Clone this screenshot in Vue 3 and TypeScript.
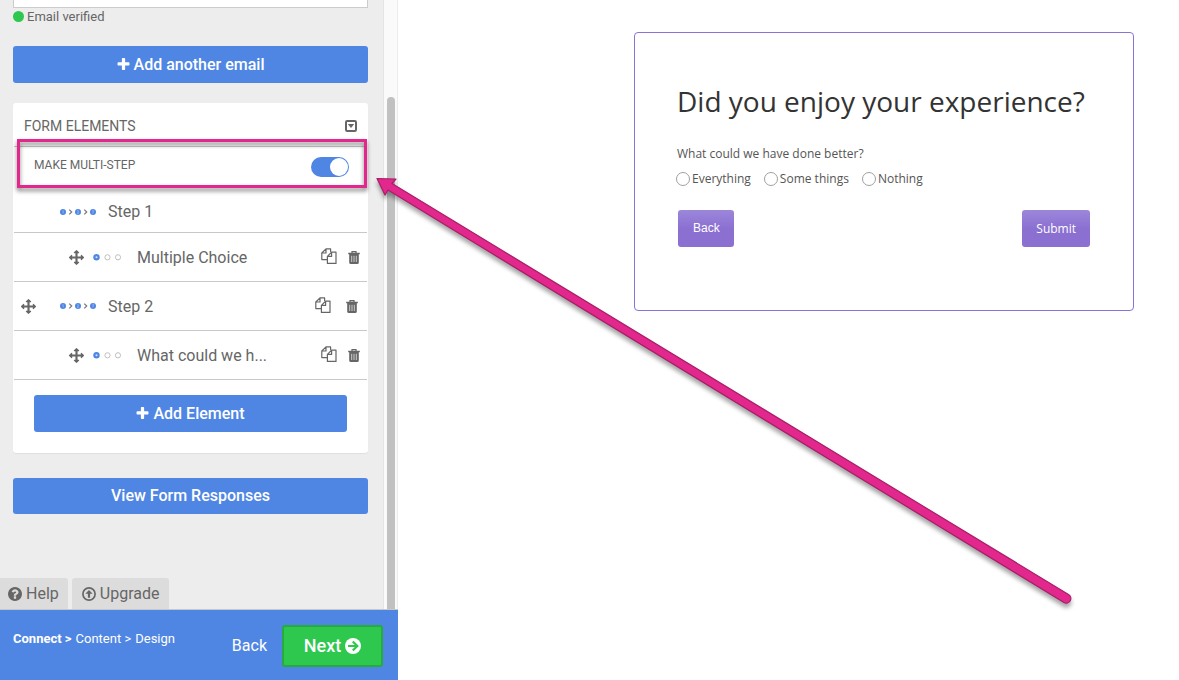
<script setup lang="ts">
import { ref } from 'vue'

interface Row {
  label: string
  kind: 'step' | 'field'
  movable: boolean
}

const rows: Row[] = [
  { label: 'Step 1', kind: 'step', movable: false },
  { label: 'Multiple Choice', kind: 'field', movable: true },
  { label: 'Step 2', kind: 'step', movable: true },
  { label: 'What could we h...', kind: 'field', movable: true },
]

const options = ['Everything', 'Some things', 'Nothing']
const multiStep = ref(true)
const answer = ref('')
const email = ref('')

const plus =
  'M1600 736v192q0 40-28 68t-68 28h-416v416q0 40-28 68t-68 28h-192q-40 0-68-28t-28-68v-416h-416q-40 0-68-28t-28-68v-192q0-40 28-68t68-28h416v-416q0-40 28-68t68-28h192q40 0 68 28t28 68v416h416q40 0 68 28t28 68z'
const arrows =
  'M1792 896q0 26-19 45l-256 256q-19 19-45 19t-45-19-19-45v-128h-384v384h128q26 0 45 19t19 45-19 45l-256 256q-19 19-45 19t-45-19l-256-256q-19-19-19-45t19-45 45-19h128v-384h-384v128q0 26-19 45t-45 19-45-19l-256-256q-19-19-19-45t19-45l256-256q19-19 45-19t45 19 19 45v128h384v-384h-128q-26 0-45-19t-19-45 19-45l256-256q19-19 45-19t45 19l256 256q19 19 19 45t-19 45-45 19h-128v384h384v-128q0-26 19-45t45-19 45 19l256 256q19 19 19 45z'
const question =
  'M1024 1376v-192q0-14-9-23t-23-9h-192q-14 0-23 9t-9 23v192q0 14 9 23t23 9h192q14 0 23-9t9-23zm256-672q0-88-55.500-163t-138.500-116-170-41q-243 0-371 213-15 24 8 42l132 100q7 6 19 6 16 0 25-12 53-68 86-92 34-24 86-24 48 0 85.500 26t37.500 59q0 38-20 61t-68 45q-63 28-115.500 86.500t-52.500 125.500v36q0 14 9 23t23 9h192q14 0 23-9t9-23q0-19 21.500-49.500t54.500-49.500q32-18 49-28.500t46-35 44.500-48 28-60.500 12.500-81zm384 192q0 209-103 385.500t-279.500 279.500-385.500 103-385.500-103-279.500-279.500-103-385.500 103-385.500 279.500-279.500 385.500-103 385.500 103 279.500 279.500 103 385.500z'
</script>

<template>
  <div class="page">
    <aside class="sidebar">
      <div class="scroller">
        <div class="content">
          <input v-model="email" class="email" type="email" aria-label="Email" />
          <p class="verified"><span class="dot"></span>Email verified</p>

          <button class="btn add-email" type="button">
            <svg class="plus" viewBox="128 128 1536 1536"><path :d="plus" /></svg>Add another email
          </button>

          <section class="card">
            <header class="card-head">
              <h2>FORM ELEMENTS</h2>
              <button class="icon-btn" type="button" aria-label="Collapse">
                <svg width="12" height="12" viewBox="0 0 12 12">
                  <rect x="1" y="1" width="10" height="10" rx="1.2" fill="none" stroke="currentColor" stroke-width="2" />
                  <path d="M2.800 4h6.400L6 8z" />
                </svg>
              </button>
            </header>

            <div class="multi">
              <label for="multi-step">MAKE MULTI-STEP</label>
              <input id="multi-step" v-model="multiStep" class="toggle" type="checkbox" />
              <span class="frame"></span>
            </div>

            <ul class="rows">
              <li v-for="row in rows" :key="row.label" :class="['row', row.kind, { first: !row.movable }]">
                <span class="grip">
                  <svg v-if="row.movable" width="15" height="15" viewBox="0 0 1792 1792"><path :d="arrows" /></svg>
                </span>
                <svg v-if="row.kind === 'step'" class="mark" width="36" height="8" viewBox="0 0 36 8">
                  <g class="blue">
                    <circle cx="3" cy="4" r="3" /><circle cx="18" cy="4" r="3" /><circle cx="33" cy="4" r="3" />
                  </g>
                  <g fill="none" stroke="#777" stroke-width="1.2">
                    <path d="M9.300 1.600l2.400 2.400-2.400 2.400M24.300 1.600l2.400 2.400-2.400 2.400" />
                  </g>
                  <g fill="none" stroke="#8fb2f3" stroke-width="0.900">
                    <path d="M2.500 3l.7-.5v3M17 3q1.200-1 1.700 0T17 5.300h2M32.200 2.700h1.500l-.7 1.200q1.200.9-.9 1.400" />
                  </g>
                </svg>
                <svg v-else class="mark" width="28" height="8" viewBox="0 0 28 8">
                  <circle cx="3.500" cy="4.300" r="3.200" class="blue" />
                  <circle cx="3.500" cy="4.300" r="1" fill="#dbe7ff" />
                  <g fill="none" stroke="#c0c0c0" stroke-width="1">
                    <circle cx="14.500" cy="4.300" r="2.600" /><circle cx="25" cy="4.300" r="2.600" />
                  </g>
                </svg>
                <span class="name">{{ row.label }}</span>
                <span v-if="row.movable" class="actions">
                  <button class="icon-btn" type="button" aria-label="Duplicate">
                    <svg width="16" height="19" viewBox="0 0 16 19">
                      <g fill="none" stroke="currentColor" stroke-width="1.200" stroke-linejoin="round">
                        <path d="M6 11.600H.8V5L5 .9h4.600v3M5 .9V5H.8" />
                        <path d="M6.400 8.400l4.200-4.200H15v11.200H6.400zM10.600 4.200v4.200H6.400" />
                      </g>
                    </svg>
                  </button>
                  <button class="icon-btn" type="button" aria-label="Delete">
                    <svg width="12" height="13" viewBox="0 0 12 13">
                      <path d="M4 2V.7h4V2" fill="none" stroke="currentColor" stroke-width="1.200" />
                      <path d="M.2 1.800h11.600v1.500H.2zM1.200 3.300h9.600v8.200q0 1.500-1.500 1.500H2.700q-1.500 0-1.500-1.500z" />
                      <path d="M3.700 4.800v6.200M6 4.800v6.200M8.300 4.800v6.200" stroke="#d8d8d8" stroke-width="0.900" />
                    </svg>
                  </button>
                </span>
              </li>
            </ul>

            <button class="btn add-element" type="button">
              <svg class="plus" viewBox="128 128 1536 1536"><path :d="plus" /></svg>Add Element
            </button>
          </section>

          <button class="btn responses" type="button">View Form Responses</button>

          <div class="tabs">
            <button type="button">
              <svg width="14" height="14" viewBox="128 128 1536 1536"><path :d="question" /></svg>Help
            </button>
            <button type="button">
              <svg width="14" height="14" viewBox="0 0 14 14">
                <circle cx="7" cy="7" r="6.100" fill="none" stroke="currentColor" stroke-width="1.700" />
                <path d="M7 3L3.300 6.800h2.600v4h2.200v-4h2.600z" />
              </svg>Upgrade
            </button>
          </div>
        </div>
        <div class="track"><div class="thumb"></div></div>
      </div>

      <footer class="footer">
        <nav class="crumbs">
          <a class="current" href="#connect">Connect &gt;</a>
          <a href="#content">Content &gt;</a>
          <a href="#design">Design</a>
        </nav>
        <button class="back" type="button">Back</button>
        <button class="next" type="button">
          Next
          <svg width="16" height="16" viewBox="0 0 16 16">
            <circle cx="8" cy="8" r="8" />
            <path d="M3 8h9M7.800 3.500L12.300 8l-4.500 4.500" fill="none" stroke="#2dc84d" stroke-width="2.200" />
          </svg>
        </button>
      </footer>
    </aside>

    <main class="preview">
      <form class="survey" @submit.prevent>
        <h1>Did you enjoy your experience?</h1>
        <fieldset>
          <legend>What could we have done better?</legend>
          <div class="options">
            <label v-for="o in options" :key="o">
              <input v-model="answer" type="radio" name="better" :value="o" />{{ o }}
            </label>
          </div>
        </fieldset>
        <div class="survey-actions">
          <button class="prev" type="button">Back</button>
          <button type="submit">Submit</button>
        </div>
      </form>
    </main>

    <svg class="pointer" width="720" height="450" viewBox="370 170 720 450">
      <path
        d="M377 178.500L396 179L392 183.500L1068.500 594.500A4.500 4.500 0 0 1 1064 602.500L388 190L385 195Z"
        fill="#e2288c"
        stroke="#a81d68"
        stroke-width="1.200"
        stroke-linejoin="round"
      />
    </svg>
  </div>
</template>

<style>
body {
  margin: 0;
}
</style>

<style scoped>
* {
  box-sizing: border-box;
}

.page {
  position: relative;
  display: flex;
  min-height: 100vh;
  overflow: hidden;
  background: #fff;
  font-family: Roboto, "Liberation Sans", sans-serif;
  color: #666;
}

button {
  font-family: inherit;
  border: 0;
  margin: 0;
  padding: 0;
  background: none;
  color: inherit;
  cursor: pointer;
}

svg {
  display: block;
  flex: none;
  fill: currentColor;
}

.sidebar {
  flex: none;
  width: 398px;
  display: flex;
  flex-direction: column;
}

.scroller {
  flex: 1;
  display: flex;
  background: #ededed;
  border-bottom: 1px solid #c8c8c8;
}

.content {
  flex: 1;
  display: flex;
  flex-direction: column;
  padding: 0 15px 0 13px;
}

.track {
  width: 15px;
  padding: 97px 2px 0 3px;
  display: flex;
  background: #fafafa;
  border-left: 1px solid #e4e4e4;
  border-right: 1px solid #ececec;
}

.thumb {
  flex: 1;
  background: #c1c1c1;
  border-radius: 4px 4px 0 0;
}

.email {
  width: 100%;
  height: 8px;
  padding: 0;
  border: 1px solid #ccc;
  border-top: 0;
  background: #fff;
}

.verified {
  margin: 0 0 22px;
  height: 16px;
  display: flex;
  align-items: center;
  gap: 3px;
  font-size: 13px;
}

.dot {
  width: 11px;
  height: 11px;
  border-radius: 50%;
  background: #2dc84d;
}

.btn {
  display: flex;
  align-items: center;
  justify-content: center;
  gap: 4px;
  height: 37px;
  border-radius: 3px;
  background: #4f86e3;
  color: #fff;
  font-size: 16px;
  font-weight: 500;
}

.plus {
  width: 13px;
  height: 13px;
}

.card {
  margin-top: 20px;
  padding: 0 1px 21px;
  background: #fff;
  border-radius: 3px;
  box-shadow: 0 1px 1px rgba(0, 0, 0, 0.06);
}

.card-head {
  display: flex;
  align-items: center;
  justify-content: space-between;
  height: 44px;
  padding: 2px 10px 0 10px;
  border-bottom: 1px solid #c8c8c8;
}

h2 {
  margin: 0;
  font-size: 14px;
  font-weight: 400;
}

.multi {
  position: relative;
  display: flex;
  justify-content: space-between;
  height: 44px;
  padding: 10px 18px 0 20px;
  font-size: 12px;
  line-height: 16px;
}

.frame {
  position: absolute;
  inset: -8px 0 3px 3px;
  border: 3px solid #e2288c;
  filter: drop-shadow(0 3px 2px rgba(0, 0, 0, 0.5));
  pointer-events: none;
}

.toggle {
  appearance: none;
  margin: 0;
  width: 38px;
  height: 20px;
  padding: 1px;
  border-radius: 10px;
  background: #ccc;
  display: flex;
}

.toggle::before {
  content: "";
  width: 18px;
  height: 18px;
  border-radius: 50%;
  background: #fff;
}

.toggle:checked {
  background: #4f86e3;
  justify-content: flex-end;
}

.rows {
  list-style: none;
  margin: 0;
  padding: 0;
}

.row {
  display: flex;
  align-items: center;
  height: 49px;
  border-bottom: 1px solid #c8c8c8;
  font-size: 16px;
}

.row.first {
  height: 42px;
}

.step {
  padding: 0 9px 0 7px;
}

.field {
  padding: 0 7px 0 55px;
}

.step .grip {
  width: 39px;
}

.field .grip {
  width: 24px;
}

.step .mark {
  margin-right: 12px;
}

.field .mark {
  margin-right: 16px;
}

.blue {
  fill: #4f86e3;
}

.actions {
  margin-left: auto;
  display: flex;
  align-items: center;
  gap: 11px;
}

.step .actions {
  gap: 15px;
}

.add-element {
  width: calc(100% - 40px);
  margin: 15px 20px 0;
}

.responses {
  margin-top: 25px;
  height: 36px;
  padding-bottom: 1px;
}

.tabs {
  display: flex;
  gap: 4px;
  margin: auto 0 0 -13px;
  padding-top: 20px;
}

.tabs button {
  display: flex;
  align-items: center;
  gap: 4px;
  height: 31px;
  padding: 0 10px;
  border-radius: 3px 3px 0 0;
  background: #dcdcdc;
  font-size: 16px;
}

.tabs button:first-child {
  padding: 0 9px 0 8px;
  border-top-left-radius: 0;
}

.footer {
  display: flex;
  align-items: center;
  height: 70px;
  padding: 2px 15px 0 13px;
  background: #4f86e3;
  color: #fff;
}

.crumbs {
  flex: 1;
  align-self: flex-start;
  display: flex;
  gap: 4px;
  padding-top: 19px;
  font-size: 13px;
  line-height: 16px;
}

.crumbs a {
  color: #fff;
  text-decoration: none;
}

.crumbs .current {
  font-weight: 700;
}

.back {
  margin-right: 15px;
  padding-bottom: 2px;
  font-size: 16px;
}

.next {
  display: flex;
  align-items: center;
  justify-content: center;
  gap: 4px;
  width: 101px;
  height: 42px;
  padding-bottom: 1px;
  border: 2px solid #27ab41;
  border-radius: 3px;
  background: #2dc84d;
  font-size: 18px;
  font-weight: 500;
}

.preview {
  flex: 1;
  display: flex;
  justify-content: flex-end;
  align-items: flex-start;
  padding: 32px 45px;
  font-family: "Open Sans", "Noto Sans", sans-serif;
}

.survey {
  width: 500px;
  padding: 48px 42px 63px;
  border: 1px solid #8b72d6;
  border-radius: 4px;
  color: #555;
  font-size: 12px;
}

h1 {
  margin: 0;
  color: #333;
  font-size: 28px;
  font-weight: 400;
  line-height: 40px;
}

fieldset {
  margin: 24px 0 0;
  padding: 0;
  border: 0;
}

legend {
  padding: 0;
  line-height: 18px;
}

.options {
  display: flex;
  gap: 13px;
  margin: 7px 0 0 -1px;
}

.options label {
  display: flex;
  align-items: center;
  gap: 2px;
  line-height: 18px;
}

.options input {
  appearance: none;
  width: 14px;
  height: 14px;
  margin: 0;
  border: 1px solid #a0a0a0;
  border-radius: 50%;
}

.options input:checked {
  border: 4px solid #8b72d6;
}

.survey-actions {
  display: flex;
  justify-content: space-between;
  margin: 22px 1px 0;
}

.survey-actions button {
  height: 37px;
  padding: 0 14px;
  border-radius: 3px;
  background: linear-gradient(#9b87da, #8b70d2 50%);
  color: #fff;
  font-size: 12px;
}

.survey-actions .prev {
  padding: 0 14px 2px 15px;
  font-family: "Liberation Sans", Arial, sans-serif;
}

.pointer {
  position: absolute;
  left: 370px;
  top: 170px;
  filter: drop-shadow(0 4px 2px rgba(0, 0, 0, 0.35));
  pointer-events: none;
}
</style>
